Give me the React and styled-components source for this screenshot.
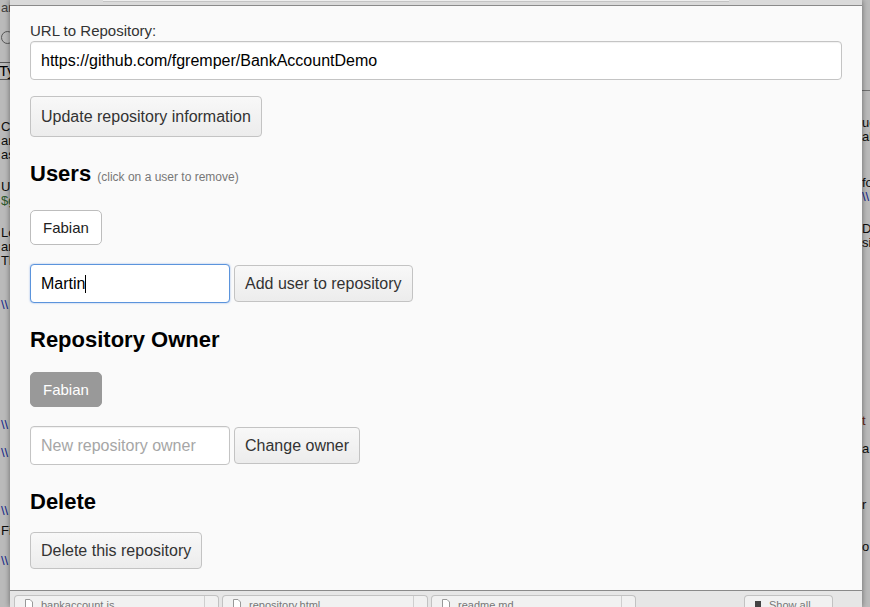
import React, { useEffect, useRef } from 'react';
import styled, { createGlobalStyle } from 'styled-components';

const GlobalStyle = createGlobalStyle`
  html, body {
    margin: 0;
    padding: 0;
  }
  body {
    width: 870px;
    height: 607px;
    overflow: hidden;
    background: #fff;
    font-family: 'Liberation Sans', Arial, Helvetica, sans-serif;
  }
`;

// background page, dimmed by the overlay
const BgPage = styled.div`
  display: flex;
  justify-content: space-between;
  height: 607px;
  font-size: 13px;
  line-height: 14px;
`;

const BgColumn = styled.div`
  width: ${p => p.$width}px;
  padding-left: ${p => p.$pad || 0}px;
  overflow: hidden;
  white-space: nowrap;
  display: flex;
  flex-direction: column;
`;

const BgLine = styled.div`
  margin-top: ${p => p.$mt || 0}px;
  color: ${p => p.$color || '#111'};
`;

const BgRadio = styled.div`
  margin-top: ${p => p.$mt}px;
  width: 11px;
  height: 11px;
  border: 1px solid #777;
  border-radius: 50%;
`;

const BgBox = styled.div`
  margin-top: ${p => p.$mt}px;
  margin-left: -6px;
  height: 16px;
  border: 1px solid #777;
  padding-left: 3px;
  font-size: 15px;
  line-height: 16px;
`;

const BgRule = styled.div`
  margin-top: ${p => p.$mt}px;
  border-top: 1px solid #999;
`;

const Overlay = styled.div`
  position: fixed;
  inset: 0;
  background: rgba(0, 0, 0, 0.27);
`;

const Panel = styled.div`
  position: fixed;
  top: 0;
  left: 10px;
  width: 852px;
  height: 607px;
  display: flex;
  flex-direction: column;
  box-shadow: 0 0 6px rgba(0, 0, 0, 0.45);
`;

const TopStrip = styled.div`
  height: 5px;
  background: #dadada;
  border-bottom: 1px solid #8a8a8a;
`;

const TopStripInner = styled.div`
  margin-left: 93px;
  width: 626px;
  height: 1px;
  background: #eeeeee;
  border-bottom: 1px solid #c4c4c4;
`;

const Content = styled.div`
  flex: 1;
  background: #fafafa;
  padding: 16px 20px 0;
  border-bottom: 1px solid #8a8a8a;
`;

const Label = styled.label`
  display: block;
  font-size: 15px;
  line-height: 18px;
  color: #333;
  margin-bottom: 1px;
`;

const InputWrap = styled.div`
  position: relative;
  display: flex;
`;

const TextInput = styled.input`
  box-sizing: border-box;
  width: ${p => (p.$width ? `${p.$width}px` : '100%')};
  height: 39px;
  padding: 0 10px;
  font-family: 'Liberation Sans', Arial, sans-serif;
  font-size: 16px;
  color: #000;
  caret-color: ${p => (p.$focused ? 'transparent' : '#000')};
  background: #fff;
  border: 1px solid ${p => (p.$focused ? '#5b94dc' : '#c4c4c4')};
  border-radius: 4px;
  box-shadow: ${p =>
    p.$focused
      ? '0 0 2px rgba(70, 130, 220, 0.6)'
      : 'inset 0 1px 1px rgba(0, 0, 0, 0.06)'};
  outline: none;

  &::placeholder {
    color: #a6a6a6;
  }
`;

// text cursor drawn over the focused field
const Caret = styled.span`
  position: absolute;
  left: ${p => p.$left}px;
  top: 11px;
  width: 1px;
  height: 18px;
  background: #000;
`;

const Row = styled.div`
  display: flex;
  align-items: center;
  gap: 4px;
  margin-top: ${p => p.$mt}px;
`;

const Button = styled.button`
  box-sizing: border-box;
  height: ${p => (p.$tall ? 41 : 37)}px;
  padding: 0 10px;
  font-family: 'Liberation Sans', Arial, sans-serif;
  font-size: 16px;
  color: #333;
  background: linear-gradient(#f8f8f8, #ececec);
  border: 1px solid #c3c3c3;
  border-radius: 4px;
  cursor: pointer;
`;

const UserTag = styled.button`
  box-sizing: border-box;
  height: 35px;
  padding: 0 12px;
  font-family: 'Liberation Sans', Arial, sans-serif;
  font-size: 15px;
  color: ${p => (p.$owner ? '#fff' : '#222')};
  background: ${p => (p.$owner ? '#999999' : '#fff')};
  border: 1px solid ${p => (p.$owner ? '#999999' : '#bdbdbd')};
  border-radius: 5px;
  cursor: pointer;
`;

const Heading = styled.h3`
  margin: ${p => p.$mt}px 0 0;
  font-size: 22px;
  line-height: 26px;
  font-weight: bold;
  color: #000;
`;

const Hint = styled.small`
  font-size: 12px;
  line-height: 1;
  font-weight: normal;
  color: #777;
`;

// editor tab strip at the bottom of the window
const TabBar = styled.div`
  height: 16px;
  background: #e6e6e6;
  display: flex;
  align-items: flex-end;
  padding-left: 4px;
  gap: 3px;
`;

const Tab = styled.div`
  box-sizing: border-box;
  width: ${p => p.$width}px;
  margin-left: ${p => p.$ml || 0}px;
  height: 12px;
  display: flex;
  align-items: flex-start;
  background: #f1f1f1;
  border: 1px solid #c2c2c2;
  border-bottom: none;
  border-radius: 4px 4px 0 0;
  overflow: hidden;
`;

const TabLabel = styled.div`
  flex: 1;
  display: flex;
  align-items: flex-start;
  gap: 8px;
  padding: 3px 0 0 10px;
  font-size: 11px;
  line-height: 12px;
  color: #777;
  white-space: nowrap;
`;

const TabClose = styled.div`
  width: 13px;
  height: 100%;
  border-left: 1px solid #cfcfcf;
`;

const FileIcon = () => (
  <svg width="8" height="10" viewBox="0 0 8 10">
    <path d="M0.5 0.5h4.5l2.5 2.5v6.5h-7z" fill="#fff" stroke="#999" />
  </svg>
);

const LockIcon = () => (
  <svg width="6" height="9" viewBox="0 0 6 9">
    <rect x="0" y="2" width="6" height="7" fill="#444" />
  </svg>
);

const App = () => {
  const userInput = useRef(null);

  useEffect(() => {
    const el = userInput.current;
    if (el) {
      el.focus();
      el.setSelectionRange(el.value.length, el.value.length);
    }
  }, []);

  return (
    <>
      <GlobalStyle />
      <BgPage>
        <BgColumn $width={10} $pad={1}>
          <BgLine $mt={1} $color='#555'>ar</BgLine>
          <BgRadio $mt={16} />
          <BgBox $mt={18}>Ty</BgBox>
          <BgLine $mt={40}>Cl</BgLine>
          <BgLine>an</BgLine>
          <BgLine>as</BgLine>
          <BgLine $mt={18}>Us</BgLine>
          <BgLine $color='#3a7a3a'>$g</BgLine>
          <BgLine $mt={18}>Lo</BgLine>
          <BgLine>an</BgLine>
          <BgLine>Th</BgLine>
          <BgLine $mt={30} $color='#2233bb'>\\</BgLine>
          <BgLine $mt={106} $color='#2233bb'>\\</BgLine>
          <BgLine $mt={14} $color='#2233bb'>\\</BgLine>
          <BgLine $mt={44} $color='#2233bb'>\\</BgLine>
          <BgLine $mt={6}>Fi</BgLine>
          <BgLine $mt={16} $color='#2233bb'>\\</BgLine>
        </BgColumn>
        <BgColumn $width={8}>
          <BgRule $mt={90} />
          <BgLine $mt={25}>ues</BgLine>
          <BgLine>abo</BgLine>
          <BgLine $mt={32}>for</BgLine>
          <BgLine $color='#2233bb'>\\</BgLine>
          <BgLine $mt={18}>D.</BgLine>
          <BgLine>sin</BgLine>
          <BgLine $mt={164} $color='#883322'>t</BgLine>
          <BgLine $mt={14}>a</BgLine>
          <BgLine $mt={42}>r</BgLine>
          <BgLine $mt={28}>o</BgLine>
        </BgColumn>
      </BgPage>
      <Overlay />
      <Panel>
        <TopStrip>
          <TopStripInner />
        </TopStrip>
        <Content>
          <Label>URL to Repository:</Label>
          <TextInput
            defaultValue='https://github.com/fgremper/BankAccountDemo'
            readOnly
          />
          <Row $mt={16}>
            <Button $tall>Update repository information</Button>
          </Row>

          <Heading $mt={24}>
            Users <Hint>(click on a user to remove)</Hint>
          </Heading>
          <Row $mt={23}>
            <UserTag>Fabian</UserTag>
          </Row>
          <Row $mt={19}>
            <InputWrap>
              <TextInput ref={userInput} $width={200} $focused defaultValue='Martin' />
              <Caret $left={55} />
            </InputWrap>
            <Button>Add user to repository</Button>
          </Row>

          <Heading $mt={24}>Repository Owner</Heading>
          <Row $mt={19}>
            <UserTag $owner>Fabian</UserTag>
          </Row>
          <Row $mt={19}>
            <TextInput $width={200} placeholder='New repository owner' />
            <Button>Change owner</Button>
          </Row>

          <Heading $mt={24}>Delete</Heading>
          <Row $mt={17}>
            <Button>Delete this repository</Button>
          </Row>
        </Content>
        <TabBar>
          <Tab $width={205}>
            <TabLabel><FileIcon />bankaccount.js</TabLabel>
            <TabClose />
          </Tab>
          <Tab $width={206}>
            <TabLabel><FileIcon />repository.html</TabLabel>
            <TabClose />
          </Tab>
          <Tab $width={205}>
            <TabLabel><FileIcon />readme.md</TabLabel>
            <TabClose />
          </Tab>
          <Tab $width={89} $ml={105}>
            <TabLabel><LockIcon />Show all</TabLabel>
          </Tab>
        </TabBar>
      </Panel>
    </>
  );
};

export default App;
